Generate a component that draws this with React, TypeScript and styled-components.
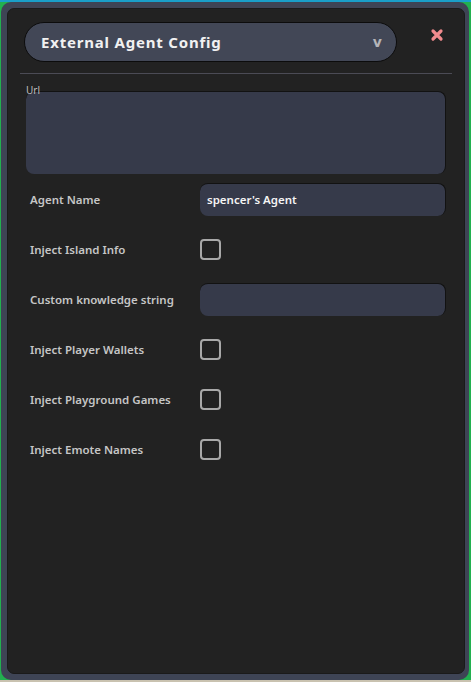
import React, {useState} from 'react'
import styled, {createGlobalStyle} from 'styled-components'

const GlobalStyle = createGlobalStyle`
  html, body {
    margin: 0;
    padding: 0;
    background: #22b04f;
    font-family: "Noto Sans", "Open Sans", sans-serif;
  }
`

const Screen = styled.div`
  width: 471px;
  height: 682px;
  box-sizing: border-box;
  padding: 2px 2px 2px 1px;
  background: linear-gradient(#1a9fc9 0 2px, #22b04f 2px calc(100% - 2px), #c9c2b0 calc(100% - 2px));
`

const Frame = styled.div`
  height: 100%;
  box-sizing: border-box;
  padding: 6px 4px 6px 6px;
  background: #3e4455;
  border-radius: 10px;
`

const Panel = styled.div`
  height: 100%;
  box-sizing: border-box;
  background: #222222;
  border-radius: 7px;
  border: 1px solid #1a1a1a;
  padding: 13px 12px 0 12px;
`

const Header = styled.div`
  display: flex;
  align-items: center;
  justify-content: space-between;
  padding: 0 8px 0 4px;
`

const Dropdown = styled.div`
  width: 373px;
  height: 40px;
  box-sizing: border-box;
  border: 1px solid #0c0c0c;
  border-radius: 20px;
  background: #424756;
  display: flex;
  align-items: center;
  justify-content: space-between;
  padding: 0 14px 0 16px;
  cursor: pointer;
`

const Title = styled.span`
  color: #f1f1f1;
  font-size: 15px;
  font-weight: 700;
  letter-spacing: 0.8px;
`

const Caret = styled.span`
  color: #b4b4b8;
  font-size: 14px;
  font-weight: 700;
  font-family: "DejaVu Sans", sans-serif;
`

const Close = styled.button`
  border: none;
  background: none;
  padding: 0;
  margin-top: -14px;
  width: 14px;
  height: 14px;
  cursor: pointer;
  display: flex;
`

const Divider = styled.div`
  height: 1px;
  background: #4b4b55;
  margin: 11px 0 0 0;
`

const UrlBlock = styled.div`
  display: flex;
  flex-direction: column;
  padding: 11px 6px 0 6px;
`

const SmallLabel = styled.label`
  color: #bdbdbd;
  font-size: 10px;
  line-height: 10px;
  margin-bottom: -4px;
  position: relative;
  z-index: 1;
`

const TextArea = styled.div`
  height: 83px;
  box-sizing: border-box;
  background: #363a4a;
  border-top: 1px solid #121212;
  border-right: 1px solid #121212;
  border-radius: 8px;
`

const Rows = styled.div`
  display: flex;
  flex-direction: column;
  padding: 0 6px 0 10px;
`

const Row = styled.div`
  height: 50px;
  display: flex;
  align-items: center;
`

const Label = styled.span`
  width: 170px;
  color: #c6c6c6;
  font-size: 11.5px;
  font-weight: 600;
`

const Input = styled.div`
  flex: 1;
  height: 33px;
  box-sizing: border-box;
  background: #363a4a;
  border-top: 1px solid #121212;
  border-right: 1px solid #121212;
  border-radius: 8px;
  display: flex;
  align-items: center;
  padding-left: 7px;
  color: #f4f4f4;
  font-size: 11.5px;
  font-weight: 600;
`

const Check = styled.div<{checked: boolean}>`
  width: 21px;
  height: 21px;
  box-sizing: border-box;
  border: 2px solid #a9a9a9;
  border-radius: 4px;
  background: ${props => props.checked ? '#a9a9a9' : 'transparent'};
  cursor: pointer;
`

const fields: {label: string, type: 'text' | 'check', value?: string}[] = [
    {label: 'Agent Name', type: 'text', value: "spencer's Agent"},
    {label: 'Inject Island Info', type: 'check'},
    {label: 'Custom knowledge string', type: 'text', value: ''},
    {label: 'Inject Player Wallets', type: 'check'},
    {label: 'Inject Playground Games', type: 'check'},
    {label: 'Inject Emote Names', type: 'check'},
]

const App: React.FC = () => {
    const [checks, setChecks] = useState<Record<string, boolean>>({})

    return (
        <Screen>
            <GlobalStyle/>
            <Frame>
                <Panel>
                    <Header>
                        <Dropdown>
                            <Title>External Agent Config</Title>
                            <Caret>v</Caret>
                        </Dropdown>
                        <Close>
                            <svg width="14" height="14" viewBox="0 0 14 14">
                                <path d="M3 3 L11 11 M11 3 L3 11" stroke="#f28b8e" strokeWidth="3.2" strokeLinecap="round"/>
                            </svg>
                        </Close>
                    </Header>
                    <Divider/>
                    <UrlBlock>
                        <SmallLabel>Url</SmallLabel>
                        <TextArea/>
                    </UrlBlock>
                    <Rows>
                        {fields.map(f => (
                            <Row key={f.label}>
                                <Label>{f.label}</Label>
                                {f.type === 'text'
                                    ? <Input>{f.value}</Input>
                                    : <Check checked={!!checks[f.label]}
                                             onClick={() => setChecks({...checks, [f.label]: !checks[f.label]})}/>}
                            </Row>
                        ))}
                    </Rows>
                </Panel>
            </Frame>
        </Screen>
    )
}

export default App
